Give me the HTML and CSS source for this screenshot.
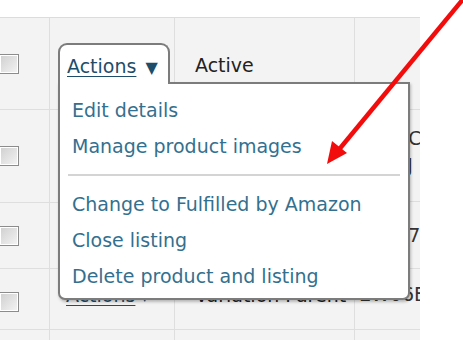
FILE: index.html
```html
<!DOCTYPE html>
<html lang="en">
  <head>
    <meta charset="UTF-8" />
    <meta name="viewport" content="width=device-width, initial-scale=1.0" />
    <title>Inventory actions</title>
    <link rel="stylesheet" href="styles.css">
  </head>
  <body>
    <div class="page">
      <div class="inventory">
        <div class="cell check-cell row-a"><span class="checkbox"></span></div>
        <div class="cell row-a"></div>
        <div class="cell status row-a">Active</div>
        <div class="cell sku row-a"></div>

        <div class="cell check-cell row-b"><span class="checkbox"></span></div>
        <div class="cell row-b"></div>
        <div class="cell row-b"></div>
        <div class="cell sku row-b">B002C0<br>0000J</div>

        <div class="cell check-cell row-c"><span class="checkbox"></span></div>
        <div class="cell row-c"></div>
        <div class="cell row-c"></div>
        <div class="cell sku row-c">B0007</div>

        <div class="cell check-cell row-d"><span class="checkbox"></span></div>
        <div class="cell row-d"><a class="actions-link" href="#">Actions</a> <span class="caret">&#9660;</span></div>
        <div class="cell status row-d">Variation Parent</div>
        <div class="cell sku row-d">EW06E</div>

        <div class="cell check-cell row-e"></div>
        <div class="cell row-e"></div>
        <div class="cell row-e"></div>
        <div class="cell row-e"></div>
      </div>

      <!-- menu ouvert sur la premiere ligne -->
      <div class="menu">
        <div class="menu-tab">
          <a class="actions-link" href="#">Actions</a> <span class="caret">&#9660;</span>
        </div>
        <div class="menu-panel">
          <a class="menu-item" href="#">Edit details</a>
          <a class="menu-item" href="#">Manage product images</a>
          <div class="menu-sep"></div>
          <a class="menu-item" href="#">Change to Fulfilled by Amazon</a>
          <a class="menu-item" href="#">Close listing</a>
          <a class="menu-item" href="#">Delete product and listing</a>
        </div>
      </div>

      <svg class="pointer" width="463" height="340" viewBox="0 0 463 340">
        <line x1="464" y1="-2" x2="337" y2="152" stroke="#f20c0c" stroke-width="4.5" />
        <polygon points="327,164 347,153 332,141" fill="#f20c0c" />
      </svg>
    </div>
  </body>
</html>
```

FILE: styles.css
```css
body {
  margin: 0;
  padding: 0;
  background: #fff;
  font-family: "DejaVu Sans", Verdana, sans-serif;
  font-size: 19px;
  color: #222;
}
.page {
  position: relative;
  width: 463px;
  height: 340px;
  overflow: hidden;
}
.inventory {
  display: grid;
  grid-template-columns: 50px 125px 180px 65px;
  width: 420px;
  margin-top: 17px;
  background: #f3f3f3;
  border-top: 1px solid #dcdcdc;
}
.cell {
  display: flex;
  align-items: center;
  border-right: 1px solid #dedede;
  border-bottom: 1px solid #dedede;
  overflow: hidden;
  white-space: nowrap;
}
.cell:nth-child(4n) {
  border-right: none;
}
.row-a {
  height: 91px;
}
.row-b {
  height: 92px;
}
.row-c {
  height: 65px;
}
.row-d {
  height: 61px;
  padding-bottom: 9px;
  box-sizing: border-box;
}
.row-d.check-cell {
  padding-bottom: 0;
}
.row-e {
  height: 40px;
}
.checkbox {
  display: block;
  width: 18px;
  height: 18px;
  margin-left: -1px;
  border: 1px solid #8c8c8c;
  box-shadow: inset 0 0 0 1px #fff;
  background: linear-gradient(135deg, #cfcfcf, #f4f4f4);
}
.row-d .checkbox {
  margin-top: 6px;
}
.row-d .actions-link {
  margin-left: 16px;
}
.status {
  padding-left: 20px;
  color: #222;
}
.row-a.status {
  align-items: flex-start;
  padding-top: 36px;
  box-sizing: border-box;
}
.sku {
  padding-left: 4px;
  line-height: 27px;
  color: #333;
}
.row-b.sku {
  padding-bottom: 8px;
  box-sizing: border-box;
}
.actions-link {
  color: #1d4d6b;
  text-decoration: underline;
  text-underline-offset: 3px;
}
.caret {
  color: #1d4d6b;
  font-size: 16px;
  margin-left: 3px;
}
.menu {
  position: absolute;
  left: 58px;
  top: 43px;
  width: 352px;
}
.menu-tab {
  position: relative;
  z-index: 2;
  width: 101px;
  height: 33px;
  padding: 6px 0 0 7px;
  background: #fff;
  border: 2px solid #7c7c7c;
  border-bottom: none;
  border-radius: 9px 9px 0 0;
  margin-bottom: -2px;
  line-height: 30px;
  white-space: nowrap;
}
.menu-panel {
  position: relative;
  z-index: 1;
  display: flex;
  flex-direction: column;
  height: 218px;
  box-sizing: border-box;
  padding: 8px 0 0 12px;
  background: #fff;
  border: 2px solid #7c7c7c;
  border-radius: 0 0 7px 7px;
  box-shadow: 1px 2px 3px rgba(0, 0, 0, 0.25);
}
.menu-item {
  display: block;
  line-height: 36px;
  color: #33708f;
  text-decoration: none;
  white-space: nowrap;
}
.menu-sep {
  height: 2px;
  margin: 10px 8px 10px -4px;
  background: #d4d4d4;
}
.pointer {
  position: absolute;
  z-index: 5;
  left: 0;
  top: 0;
  pointer-events: none;
}
```
